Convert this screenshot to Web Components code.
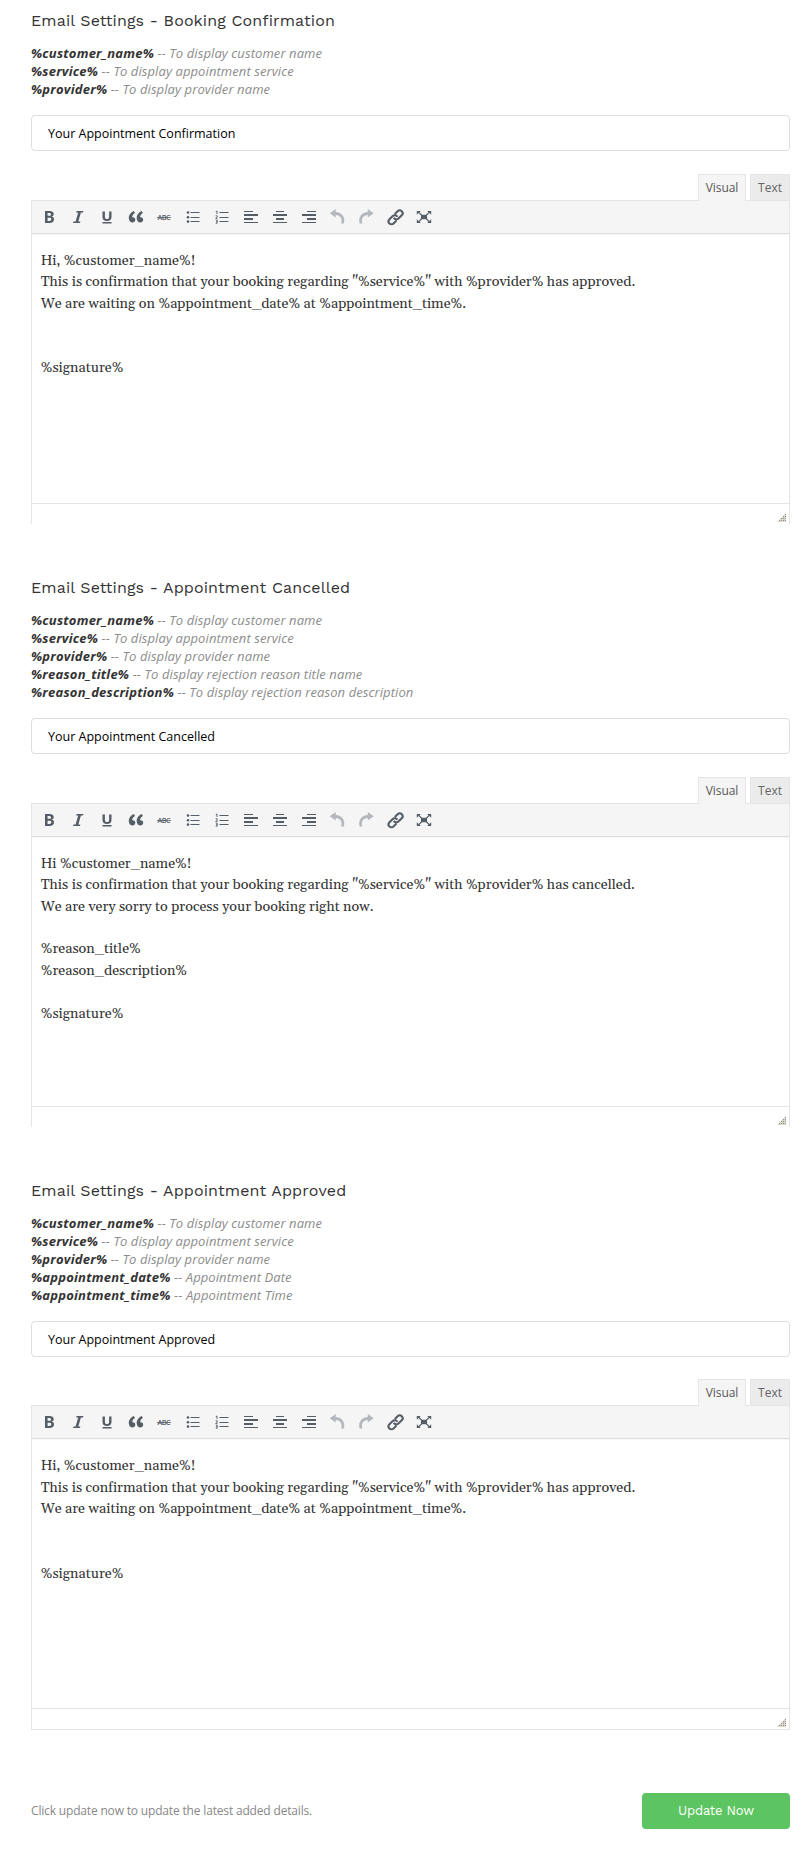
<!DOCTYPE html>
<html lang="en">
<head>
<meta charset="utf-8">
<title>Email Settings</title>
<style>
body { margin: 0; background: #fff; font-family: "Open Sans", "Noto Sans", sans-serif; }
</style>
</head>
<body>
<settings-page>
  <email-section heading="Email Settings - Booking Confirmation" subject="Your Appointment Confirmation">
    <hint-row slot="hints" token="%customer_name%">To display customer name</hint-row>
    <hint-row slot="hints" token="%service%">To display appointment service</hint-row>
    <hint-row slot="hints" token="%provider%">To display provider name</hint-row>
    <div>Hi, %customer_name%!</div>
    <div>This is confirmation that your booking regarding "%service%" with %provider% has approved.</div>
    <div>We are waiting on %appointment_date% at %appointment_time%.</div>
    <br><br>
    <div>%signature%</div>
  </email-section>
  <email-section heading="Email Settings - Appointment Cancelled" subject="Your Appointment Cancelled">
    <hint-row slot="hints" token="%customer_name%">To display customer name</hint-row>
    <hint-row slot="hints" token="%service%">To display appointment service</hint-row>
    <hint-row slot="hints" token="%provider%">To display provider name</hint-row>
    <hint-row slot="hints" token="%reason_title%">To display rejection reason title name</hint-row>
    <hint-row slot="hints" token="%reason_description%">To display rejection reason description</hint-row>
    <div>Hi %customer_name%!</div>
    <div>This is confirmation that your booking regarding "%service%" with %provider% has cancelled.</div>
    <div>We are very sorry to process your booking right now.</div>
    <br>
    <div>%reason_title%</div>
    <div>%reason_description%</div>
    <br>
    <div>%signature%</div>
  </email-section>
  <email-section class="last" heading="Email Settings - Appointment Approved" subject="Your Appointment Approved">
    <hint-row slot="hints" token="%customer_name%">To display customer name</hint-row>
    <hint-row slot="hints" token="%service%">To display appointment service</hint-row>
    <hint-row slot="hints" token="%provider%">To display provider name</hint-row>
    <hint-row slot="hints" token="%appointment_date%">Appointment Date</hint-row>
    <hint-row slot="hints" token="%appointment_time%">Appointment Time</hint-row>
    <div>Hi, %customer_name%!</div>
    <div>This is confirmation that your booking regarding "%service%" with %provider% has approved.</div>
    <div>We are waiting on %appointment_date% at %appointment_time%.</div>
    <br><br>
    <div>%signature%</div>
  </email-section>
  <update-bar slot="footer" label="Update Now">Click update now to update the latest added details.</update-bar>
</settings-page>

<script>
const define = (name, render) => customElements.define(name, class extends HTMLElement {
  constructor() { super(); this.attachShadow({ mode: 'open' }); }
  connectedCallback() { this.shadowRoot.innerHTML = render(this); }
});

const lines = rows => rows.map(([x, y, w, h]) => `<rect x="${x}" y="${y}" width="${w}" height="${h}"/>`).join('');

const ICONS = {
  bold: '<path d="M6 4v12h4.54c1.37 0 2.46-.3 3.26-.9.8-.6 1.2-1.46 1.2-2.57 0-.84-.17-1.46-.51-1.92s-.9-.8-1.67-.96v-.09c.57-.1 1.02-.38 1.36-.84s.51-1.03.51-1.74c0-1.04-.39-1.8-1.17-2.28C12.75 4.24 11.5 4 9.78 4H6zm2.57 4.75V6.1h1.36c.73 0 1.27.1 1.61.3.34.2.51.52.51.98 0 .5-.16.84-.47 1.05s-.82.32-1.51.32h-1.5zm0 2.05h1.6c1.44 0 2.16.49 2.16 1.47 0 .55-.17.96-.51 1.23s-.86.4-1.57.4H8.57v-3.1z"/>',
  italic: '<path d="M15 5.600h-2.100l-2.600 8.800h2.100l-.5 1.600H5l.5-1.600h2.100l2.600-8.800H8.100l.5-1.600h6.900z"/>',
  underline: '<path d="M5.500 4.400h2.400v5.400c0 1.500.7 2.300 2.100 2.300s2.100-.8 2.100-2.300V4.400h2.400v5.500c0 2.600-1.600 4-4.500 4s-4.500-1.400-4.500-4zM5.500 15h9v1.600h-9z"/>',
  quote: '<path d="M9.490 13.220c0-.74-.2-1.380-.61-1.900-.62-.78-1.830-.88-2.530-.72-.29-1.650 1.110-3.750 2.920-4.650L7.880 4c-2.730 1.300-5.420 4.280-4.960 8.050C3.210 14.430 4.590 16 6.540 16c.85 0 1.560-.25 2.120-.75s.83-1.180.83-2.030zm8.050 0c0-.74-.2-1.380-.61-1.900-.63-.78-1.830-.88-2.530-.72-.29-1.650 1.110-3.750 2.920-4.650L15.930 4c-2.730 1.300-5.410 4.280-4.950 8.050.29 2.380 1.660 3.950 3.610 3.950.85 0 1.560-.25 2.120-.75s.83-1.180.83-2.030z" transform="translate(0 .3) scale(.98 .95)"/>',
  strike: '<text x="10" y="12.600" text-anchor="middle" font-family="Open Sans, sans-serif" font-size="7.200" font-weight="600" textLength="13">ABC</text><rect x="3" y="10" width="14" height=".8"/>',
  ul: lines([[7.5, 5, 9, 1], [7.5, 10, 9, 1], [7.5, 14, 9, 1]]) + '<circle cx="5" cy="5.500" r="1.300"/><circle cx="5" cy="10.300" r="1.300"/><circle cx="5" cy="14.600" r="1.300"/>',
  ol: lines([[7.5, 5, 9, 1], [7.5, 10, 9, 1], [7.5, 14, 9, 1]]) + '<path d="M3.800 4.600 5 4v3M3.700 8.800h1.500v1.300l-1.500 1.500h1.800M3.800 13.200h1.400v3H3.700M4 14.700h1.200" fill="none" stroke="currentColor" stroke-width=".9"/>',
  left: lines([[3, 4, 9, 1], [3, 7, 14, 2], [3, 11, 9, 2], [3, 15, 14, 1]]),
  center: lines([[6, 4, 8, 1], [3, 7, 14, 2], [6, 11, 8, 2], [3, 15, 14, 1]]),
  right: lines([[8, 4, 9, 1], [3, 7, 14, 2], [8, 11, 9, 2], [3, 15, 14, 1]]),
  undo: '<path transform="translate(.5 0)" d="M8.200 2v3.100c5.200.4 8.600 3.800 8.600 8.300 0 1.200-.2 2.300-.5 3.200h-2.700c.4-1 .5-1.900.5-2.900 0-3.200-2.200-5.300-5.900-5.600v2.500L2.300 6.200z"/>',
  redo: '<path transform="matrix(-1 0 0 1 20 0)" d="M8.200 2v3.100c5.200.4 8.600 3.800 8.600 8.300 0 1.200-.2 2.300-.5 3.200h-2.700c.4-1 .5-1.900.5-2.900 0-3.200-2.200-5.300-5.900-5.600v2.500L2.300 6.200z"/>',
  link: '<g transform="translate(.6 .3) rotate(-45 10 10)" fill="none" stroke="currentColor" stroke-width="2.100"><path d="M8.200 12.900H4.200a2.900 2.900 0 0 1 0-5.800h4.700a2.900 2.900 0 0 1 2.700 3.800M11.800 7.100h4a2.900 2.900 0 0 1 0 5.800h-4.700a2.900 2.900 0 0 1-2.700-3.800"/></g>',
  full: '<rect x="7" y="7.800" width="6" height="4.400"/><path d="M2.800 4h4L5.500 5.300l2.800 2.800-.8.800-2.900-2.800L2.800 7.800zM17.200 4v3.800l-1.800-1.700-2.900 2.800-.8-.8 2.800-2.800L13.200 4zM2.800 16v-3.800l1.800 1.700 2.900-2.800.8.800-2.800 2.800L6.800 16zM17.200 16h-4l1.300-1.300-2.800-2.800.8-.8 2.900 2.800 1.800-1.700z"/>'
};

define('tool-icon', el => `
<style>
:host { display: flex; justify-content: center; width: 28.85px; color: #555d66; }
:host([disabled]) { color: #b4b7bb; }
svg { display: block; width: 20px; height: 20px; fill: currentColor; }
</style>
<svg viewBox="0 0 20 20">${ICONS[el.getAttribute('name')]}</svg>`);

define('hint-row', el => `
<style>
:host { display: block; font: italic 13px/17.9px "Open Sans", sans-serif; letter-spacing: .09px; color: #8c8c8c; white-space: nowrap; }
b { color: #333; letter-spacing: .22px; }
</style>
<b>${el.getAttribute('token')}</b> -- <slot></slot>`);

define('rich-editor', () => `
<style>
:host { display: block; }
.tabs { display: flex; justify-content: flex-end; gap: 4px; height: 26px; }
.tab { box-sizing: border-box; height: 26px; border: 1px solid #e5e5e5; border-bottom: 0; background: #ebebeb;
  color: #666; font-size: 12px; line-height: 26px; text-align: center; width: 40px; }
.tab.on { background: #f5f5f5; color: #555; width: 48px; height: 27px; position: relative; letter-spacing: -.1px; }
.frame { border: 1px solid #e5e5e5; border-bottom: var(--edge, 0); box-sizing: border-box; height: var(--frame-height, 324px); }
.bar { box-sizing: border-box; height: 33px; display: flex; align-items: center; padding: 0 2.6px; background: #f5f5f5;
  border-bottom: 1px solid #ddd; }
.text { box-sizing: border-box; height: 269px; padding: 17px 8.7px; color: #333;
  font: 14.3px/21.45px Gelasio, "Noto Serif", "DejaVu Serif", serif; letter-spacing: .01px; white-space: nowrap; box-shadow: inset 0 1px 0 #f7f7f7; }
.status { box-sizing: border-box; height: 21px; border-top: 1px solid #e5e5e5; display: flex; justify-content: flex-end; align-items: flex-end; padding: 0 3px 2px; }
.status svg { display: block; }
</style>
<div class="tabs"><div class="tab on">Visual</div><div class="tab">Text</div></div>
<div class="frame">
  <div class="bar">${Object.keys(ICONS).map(n => `<tool-icon name="${n}"${/do$/.test(n) ? ' disabled' : ''}></tool-icon>`).join('')}</div>
  <div class="text"><slot></slot></div>
  <div class="status"><svg width="9" height="9" viewBox="0 0 9 9"><path d="M0 9 9 0v9z" fill="#ddd6ca"/><path d="M2 7.500h1M4 7.500h1M6 7.500h1M8 7.500h1M4 5.500h1M6 5.500h1M8 5.500h1M6 3.500h1M8 3.500h1M8 1.500h1" stroke="#8d8f91"/></svg></div>
</div>`);

define('email-section', el => `
<style>
:host { display: block; margin-bottom: 43.2px; }
:host(.last) { --edge: 1px solid #e5e5e5; --frame-height: 325px; margin-bottom: 0; }
h2 { margin: 0; padding-top: 9.3px; font: 400 16px/24px "Work Sans", "Open Sans", sans-serif; letter-spacing: .13px; color: #333; }
.hints { padding: 11.8px 0 16.5px; }
.subject { box-sizing: border-box; height: 35.6px; border: 1px solid #ddd; border-radius: 4px; padding-left: 16px;
  font-size: 12.5px; line-height: 36px; color: #000; margin-bottom: 22.9px; }
</style>
<h2>${el.getAttribute('heading')}</h2>
<div class="hints"><slot name="hints"></slot></div>
<div class="subject">${el.getAttribute('subject')}</div>
<rich-editor><slot></slot></rich-editor>`);

define('update-bar', el => `
<style>
:host { display: flex; justify-content: space-between; align-items: center; margin-top: 62.6px; font-size: 12px; color: #888; letter-spacing: -.17px; }
button { width: 148px; height: 36px; border: 0; border-radius: 4px; padding: 0; background: #5cc561; color: #fff;
  font: 400 13px "Work Sans", "Open Sans", sans-serif; letter-spacing: -.2px; }
</style>
<span><slot></slot></span><button>${el.getAttribute('label')}</button>`);

define('settings-page', () => `
<style>
:host { display: block; box-sizing: border-box; width: 806px; height: 1861px; padding: 0 16px 0 31px; overflow: hidden; }
</style>
<slot></slot><slot name="footer"></slot>`);
</script>
</body>
</html>
